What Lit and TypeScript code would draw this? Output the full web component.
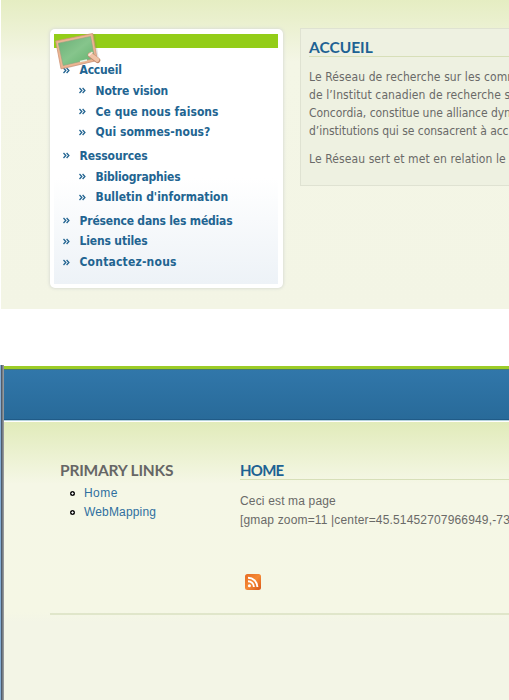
import { LitElement, html, css } from "lit";
import { customElement } from "lit/decorators.js";
import { styleMap } from "lit/directives/style-map.js";

interface MenuItem {
  label: string;
  tracking: number;
  children?: MenuItem[];
}

const MENU: MenuItem[] = [
  {
    label: "Accueil",
    tracking: -0.2,
    children: [
      { label: "Notre vision", tracking: -0.12 },
      { label: "Ce que nous faisons", tracking: 0.05 },
      { label: "Qui sommes-nous?", tracking: 0.03 },
    ],
  },
  {
    label: "Ressources",
    tracking: -0.1,
    children: [
      { label: "Bibliographies", tracking: -0.2 },
      { label: "Bulletin d'information", tracking: -0.03 },
    ],
  },
  { label: "Présence dans les médias", tracking: -0.18 },
  { label: "Liens utiles", tracking: -0.15 },
  { label: "Contactez-nous", tracking: 0.2 },
];

@customElement("side-menu")
export class SideMenu extends LitElement {
  static styles = css`
    :host {
      display: block;
      position: relative;
      box-sizing: border-box;
      width: 233px;
      height: 259px;
      padding: 5px 5px 4px 4px;
      background: #fff;
      border-radius: 5px;
      box-shadow: 0 0 3px 1px #dcdfd6;
    }
    .bar {
      height: 14px;
      background: #93cd18;
    }
    .body {
      height: 236px;
      box-sizing: border-box;
      padding: 12px 0 0 9px;
      background: linear-gradient(#fff 55%, #edf2f7);
    }
    ul {
      list-style: none;
      margin: 0;
      padding: 0;
    }
    ul ul {
      padding: 0 0 3px 16px;
    }
    .row {
      display: flex;
      align-items: center;
      height: 20.65px;
      font: bold 12px/20px "DejaVu Sans Condensed", "DejaVu Sans", sans-serif;
      font-stretch: condensed;
      color: #226491;
      white-space: nowrap;
    }
    .row svg {
      width: 7px;
      height: 7px;
      margin-right: 10px;
    }
    .board {
      position: absolute;
      left: 4px;
      top: 3px;
      width: 48px;
      height: 38px;
    }
  `;

  private items(list: MenuItem[]): unknown {
    return html`<ul>
      ${list.map(
        (item) => html`<li>
          <div class="row">
            <svg viewBox="0 0 7 7">
              <path d="M.5 1 2.8 3.5 .5 6M3.6 1 5.9 3.5 3.6 6" fill="none" stroke="#226491" stroke-width="1.3" />
            </svg>
            <span style=${styleMap({ letterSpacing: `${item.tracking}px` })}>${item.label}</span>
          </div>
          ${item.children ? this.items(item.children) : null}
        </li>`
      )}
    </ul>`;
  }

  render() {
    return html`
      <div class="bar"></div>
      <div class="body">${this.items(MENU)}</div>
      <svg class="board" viewBox="0 0 48 38">
        <defs>
          <linearGradient id="slate" x1="0" y1="0" x2="1" y2="1">
            <stop offset="0" stop-color="#6aae76" />
            <stop offset=".5" stop-color="#86c58c" />
            <stop offset="1" stop-color="#62b06d" />
          </linearGradient>
        </defs>
        <path d="M4 10 41 2 45 28 9 37.5Z" fill="#777" opacity=".2" />
        <path d="M1.7 9 38.7 1.5 43.3 28.5 7 36.8Z" fill="#ecb592" stroke="#cf9678" stroke-width=".8" stroke-linejoin="round" />
        <path d="M4.3 11.2 36.6 4.5 40.6 26.2 9.2 33.5Z" fill="url(#slate)" stroke="#8fa481" stroke-width=".6" />
        <path d="M26 29.5 33 27.9" stroke="#e8f5e8" stroke-width="1.5" />
        <path d="M36.5 23 43.6 28.4" stroke="#c08a6e" stroke-width="5.4" stroke-linecap="round" />
        <path d="M36.3 22.6 43.2 27.8" stroke="#f0c3a6" stroke-width="4.2" stroke-linecap="round" />
        <path d="M34.5 23.6 38.5 20.2" stroke="#fbe8dc" stroke-width="1.6" />
      </svg>
    `;
  }
}

@customElement("app-root")
export class AppRoot extends LitElement {
  static styles = css`
    :host {
      display: block;
      width: 509px;
      height: 700px;
      overflow: hidden;
      background: #fff;
      color: #6a6a68;
    }
    .first {
      display: flex;
      align-items: flex-start;
      box-sizing: border-box;
      height: 309px;
      margin-left: 1px;
      padding: 28px 0 0 48.5px;
      background: linear-gradient(#e5edc2, #f4f6e6 62px, #f3f5e5);
    }
    side-menu {
      flex: none;
      margin-top: 1px;
    }
    .panel {
      flex: none;
      box-sizing: border-box;
      width: 300px;
      height: 158px;
      margin-left: 17.5px;
      padding: 9px 8px;
      border: 1px solid #dfe2d2;
      background: #eef1e1;
      font: 12px/18px "DejaVu Sans Condensed", "DejaVu Sans", sans-serif;
      font-stretch: condensed;
      letter-spacing: 0.1px;
      white-space: nowrap;
    }
    h2 {
      box-sizing: border-box;
      height: 19px;
      margin: 0;
      font: bold 15.5px/18px Lato, sans-serif;
      letter-spacing: 0;
      color: #1d6293;
    }
    .ruled {
      border-bottom: 1px solid #d7dfb8;
    }
    .panel p {
      margin: 0 0 10px;
    }
    .panel h2 + p {
      margin-top: 11px;
    }
    .tight {
      letter-spacing: -0.04px;
    }
    .second {
      display: flex;
      height: 335px;
      margin-top: 56px;
    }
    .edge {
      flex: none;
      width: 3px;
      border-left: 1px solid #83add6;
      background: linear-gradient(90deg, #4f5c6c 1px, #777e84 1px 2px, #92979b 2px);
    }
    .page {
      flex: 1;
      min-width: 0;
    }
    .banner {
      box-sizing: border-box;
      height: 55px;
      margin-top: 1px;
      border-top: 3px solid #9ccc27;
      border-bottom: 1px solid #b5d3dc;
      background: linear-gradient(#3177aa, #286a99);
      box-shadow: inset 0 1px #477b70, inset 0 -1px #205b88;
    }
    .content {
      box-sizing: border-box;
      height: 279px;
      border-top: 1px solid #fff;
      padding: 39px 0 0 46px;
      background: linear-gradient(#e1ebba, #f5f7e6 62px, #f5f7e5 190px, #f3f5e6 200px);
    }
    .columns {
      display: flex;
      height: 152px;
      border-bottom: 2px solid #e0e6ca;
      font: 12px/19px "Liberation Sans", Arial, sans-serif;
      letter-spacing: 0.16px;
    }
    .links {
      flex: none;
      width: 180px;
      padding-left: 10px;
    }
    .links h2 {
      color: #666;
      letter-spacing: -0.2px;
    }
    .links ul {
      list-style: none;
      margin: 4px 0 0;
      padding: 0 0 0 10px;
      color: #2f6f9f;
    }
    .links li {
      display: flex;
      align-items: center;
      gap: 9px;
    }
    .links li:first-child {
      letter-spacing: 0.45px;
    }
    .dot {
      box-sizing: border-box;
      width: 5px;
      height: 5px;
      border-radius: 50%;
      background: radial-gradient(circle, #fff 0.8px, #111 1.3px);
    }
    .main {
      flex: 1;
      min-width: 0;
      white-space: nowrap;
    }
    .main h2 {
      font-size: 15px;
      letter-spacing: -0.75px;
    }
    .main p {
      margin: 12px 0 0;
    }
    .rss {
      display: block;
      width: 16px;
      height: 16px;
      margin: 44px 0 0 5px;
    }
  `;

  render() {
    return html`
      <section class="first">
        <side-menu></side-menu>
        <article class="panel">
          <h2 class="ruled">ACCUEIL</h2>
          <p>
            Le Réseau de recherche sur les comm<br />
            de l’Institut canadien de recherche s<br />
            <span class="tight">Concordia, constitue une alliance dyn</span><br />
            <span class="tight">d’institutions qui se consacrent à acc</span>
          </p>
          <p>Le Réseau sert et met en relation le</p>
        </article>
      </section>
      <section class="second">
        <div class="edge"></div>
        <div class="page">
          <header class="banner"></header>
          <div class="content">
            <div class="columns">
              <nav class="links">
                <h2>PRIMARY LINKS</h2>
                <ul>
                  <li><i class="dot"></i><span>Home</span></li>
                  <li><i class="dot"></i><span>WebMapping</span></li>
                </ul>
              </nav>
              <main class="main">
                <h2 class="ruled">HOME</h2>
                <p>Ceci est ma page<br />[gmap zoom=11 |center=45.51452707966949,-73</p>
                <svg class="rss" viewBox="0 0 16 16">
                  <defs>
                    <linearGradient id="orange" x1="0" y1="0" x2="1" y2="1">
                      <stop offset="0" stop-color="#e66b22" />
                      <stop offset=".5" stop-color="#f58a35" />
                      <stop offset="1" stop-color="#d95718" />
                    </linearGradient>
                  </defs>
                  <rect width="16" height="16" rx="2.5" fill="url(#orange)" />
                  <circle cx="4.4" cy="11.7" r="1.5" fill="#fff" />
                  <path d="M3 7.2a5.9 5.9 0 0 1 5.9 5.9M3 3.7a9.4 9.4 0 0 1 9.4 9.4" fill="none" stroke="#fff" stroke-width="1.9" />
                </svg>
              </main>
            </div>
          </div>
        </div>
      </section>
    `;
  }
}
